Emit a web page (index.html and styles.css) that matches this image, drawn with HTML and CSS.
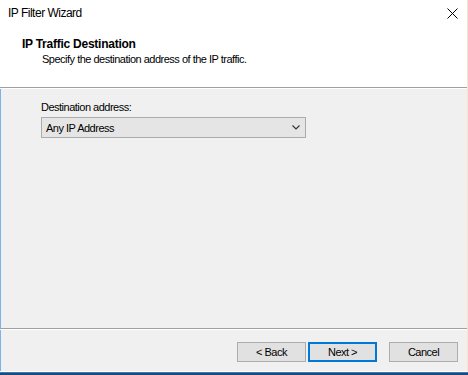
FILE: index.html
```html
<!DOCTYPE html>
<html lang="en">
<head>
    <meta charset="UTF-8">
    <title>IP Filter Wizard</title>
    <link rel="stylesheet" href="styles.css">
</head>
<body>

    <div class="window">
        <div class="titlebar">
            <span class="title">IP Filter Wizard</span>
            <svg class="close" width="11" height="11" viewBox="0 0 11 11">
                <path d="M0.5 0.5 L10.5 10.5 M10.5 0.5 L0.5 10.5" stroke="#000" stroke-width="1" fill="none"/>
            </svg>
        </div>

        <div class="header">
            <div class="header-title">IP Traffic Destination</div>
            <div class="header-sub">Specify the destination address of the IP traffic.</div>
        </div>

        <div class="separator"></div>

        <div class="content">
            <label class="field-label" for="dest">Destination address:</label>
            <div class="select" id="dest">
                <span>Any IP Address</span>
                <svg width="8" height="5" viewBox="0 0 8 5">
                    <path d="M0.5 0.5 L4 4 L7.5 0.5" stroke="#333" stroke-width="1.1" fill="none"/>
                </svg>
            </div>
        </div>

        <div class="separator"></div>

        <div class="buttons">
            <button class="btn">&lt; Back</button>
            <button class="btn default">Next &gt;</button>
            <button class="btn cancel">Cancel</button>
        </div>
    </div>

    <div class="taskbar"></div>

</body>
</html>
```

FILE: styles.css
```css
body {
    margin: 0;
    width: 468px;
    height: 375px;
    overflow: hidden;
    background: #f0f0f0;
    font-family: "Liberation Sans", Arial, sans-serif;
    font-size: 11px;
    letter-spacing: -0.5px;
    color: #000;
}
.window {
    height: 371px;
    display: flex;
    flex-direction: column;
    border-right: 1px solid #f6e3d2;
    border-bottom: 1px solid #fff;
}
.titlebar {
    height: 30px;
    background: #fff;
    display: flex;
    justify-content: space-between;
    align-items: flex-start;
    padding: 6px 9px 0 8px;
    box-sizing: border-box;
}
.title {
    font-size: 12px;
}
.close {
    margin-top: 2px;
}
.header {
    height: 57px;
    background: #fff;
    padding: 7px 0 0 22px;
    box-sizing: border-box;
}
.header-title {
    font-weight: bold;
    font-size: 12px;
    letter-spacing: -0.25px;
    line-height: 14px;
}
.header-sub {
    margin: 2px 0 0 20px;
    line-height: 13px;
}
.separator {
    height: 1px;
    background: #a0a0a0;
    border-bottom: 1px solid #fff;
}
.content {
    flex: 1;
    padding: 11px 0 0 41px;
    border-left: 1px solid #7ab4ea;
}
.field-label {
    display: block;
    margin-left: -1px;
    line-height: 14px;
}
.select {
    margin: 3px 0 0 -1px;
    width: 265px;
    height: 21px;
    box-sizing: border-box;
    background: #e5e5e5;
    border: 1px solid #acacac;
    display: flex;
    align-items: center;
    justify-content: space-between;
    padding: 0 5px 0 4px;
}
.buttons {
    height: 41px;
    display: flex;
    justify-content: flex-end;
    align-items: flex-start;
    padding: 12px 9px 0 0;
    box-sizing: border-box;
    border-left: 1px solid #7ab4ea;
}
.btn {
    width: 69px;
    height: 20px;
    background: #e1e1e1;
    border: 1px solid #adadad;
    font-family: "Liberation Sans", Arial, sans-serif;
    font-size: 11px;
    letter-spacing: -0.5px;
    color: #000;
    padding: 0;
    margin-left: 2px;
}
.btn.default {
    border-color: #0078d7;
    box-shadow: inset 0 0 0 1px #0078d7;
}
.btn.cancel {
    margin-left: 12px;
}
.taskbar {
    height: 3px;
    background: #1c4a7c;
    border-top: 1px solid #3a78b8;
}
```
